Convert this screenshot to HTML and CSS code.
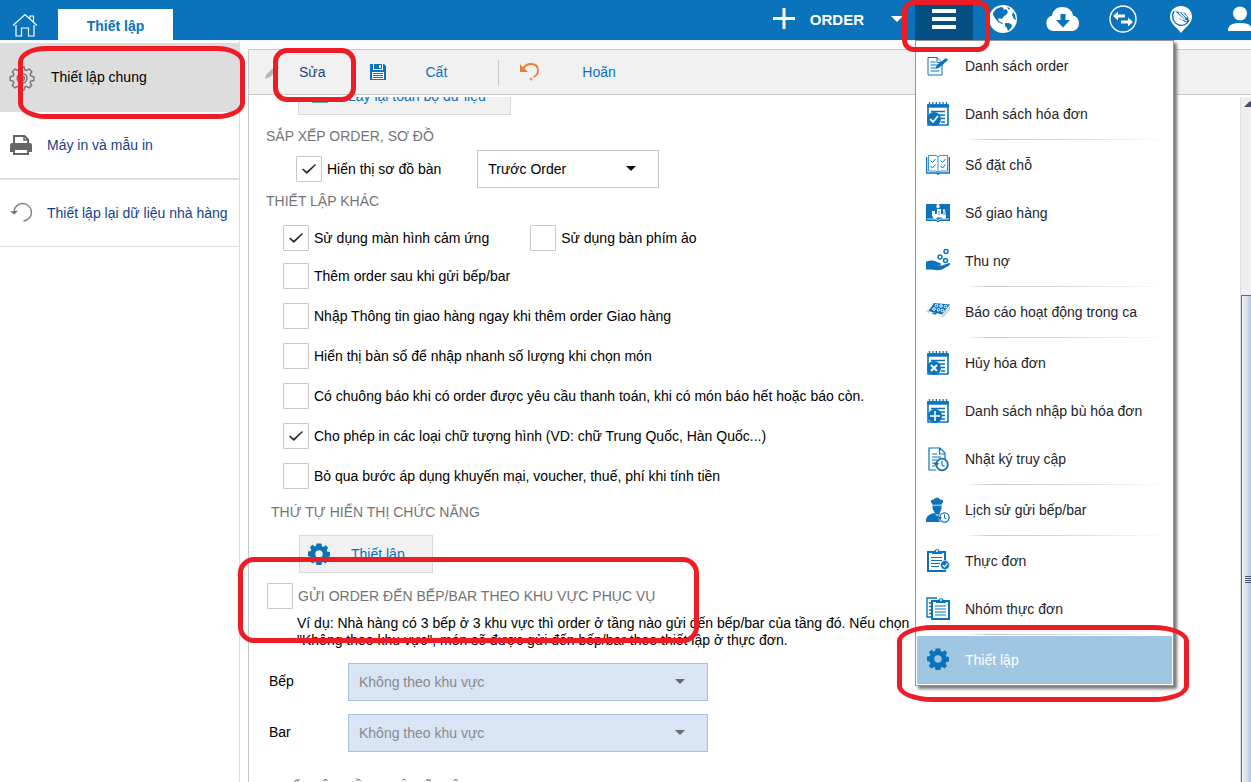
FILE: index.html
```html
<!DOCTYPE html>
<html lang="vi">
<head>
<meta charset="utf-8">
<title>Thiết lập</title>
<meta name="viewport" content="width=device-width, initial-scale=1">
<link rel="stylesheet" href="styles.css">
</head>
<body>
<svg class="defs" aria-hidden="true">
  <defs>
    <symbol id="gear" viewBox="0 0 22 22">
      <path fill-rule="evenodd" d="M8.500.500h5l.4 2.800 1.300.6 2.500-1.600 2.400 2.500-1.400 2.400.5 1.300 2.800.5v4.500l-2.800.6-.6 1.400 1.400 2.400-2.500 2.500-2.300-1.500-1.300.6-.4 2.500h-5l-.5-2.500-1.300-.6-2.400 1.500-2.500-2.500 1.500-2.400-.6-1.400L0 13V8.500L2.800 8l.5-1.300L1.900 4.300l2.400-2.500 2.500 1.600 1.300-.6zM11 7.300a3.700 3.700 0 1 0 0 7.400 3.700 3.700 0 0 0 0-7.400z"/>
    </symbol>
    <symbol id="notepad" viewBox="0 0 24 26">
      <path d="M2 4h20v20H2z" fill="#fff" stroke="currentColor" stroke-width="1.600"/>
      <path d="M1.200 3.500h21.600v3.200H1.200z" fill="currentColor"/>
      <path d="M3.500 1v4M6.900 1v4M10.300 1v4M13.700 1v4M17.100 1v4M20.500 1v4" stroke="currentColor" stroke-width="1.300"/>
      <path d="M5 10.500h14M12 14h7M15 17.500h4M15 21h4" stroke="currentColor" stroke-width="1.400"/>
    </symbol>
  </defs>
</svg>

<header class="topbar">
  <a class="home" href="#" aria-label="Trang chủ">
    <svg width="26" height="24" viewBox="0 0 26 24" fill="none" stroke="#fff" stroke-width="1.200"><path d="M1 12.500 13 1.500l12 11M4 12v11h5.500v-8h7v8H22V12M18 5.500V3h3.500v6"/></svg>
  </a>
  <a class="tab" href="#">Thiết lập</a>
  <nav class="actions">
    <button class="add-order" type="button">
      <svg width="22" height="22" viewBox="0 0 22 22"><path d="M11 0v21M0 10.500h22" stroke="#fff" stroke-width="3"/></svg>
      ORDER
    </button>
    <button class="more" type="button" aria-label="Thêm"><span class="tri"></span></button>
    <div class="menu-wrap">
      <button class="burger" type="button" aria-label="Menu"><span></span><span></span><span></span></button>
      <div class="menu">
        <a href="#"><svg width="24" height="26" viewBox="0 0 24 26" fill="none" stroke="currentColor"><path d="M2 4.500h9l5 5V22H2zM11 4.500v5h5M4.500 9h5M4.500 12h8M4.500 15h7M4.500 18h9" stroke-width="1"/><path d="m10 15 1.500-3L20 5.500l1.500 1.500-8 7z" fill="currentColor" stroke-width="1"/></svg>Danh sách order</a>
        <a href="#"><svg width="24" height="26" viewBox="0 0 24 26"><use href="#notepad"/><circle cx="8" cy="18" r="7" fill="currentColor"/><path d="m4 18 3 3 5-6" fill="none" stroke="#fff" stroke-width="1.800"/></svg>Danh sách hóa đơn</a>
        <hr>
        <a href="#"><svg width="24" height="26" viewBox="0 0 24 26" fill="none" stroke="currentColor"><path d="M.500 5v16h10l1.500 1 1.500-1h10V5" stroke-width="1.600"/><path d="M2.500 3.500H10l2 1.500 2-1.500h7.500V19H14l-2 1.500-2-1.500H2.500zM12 5v15" stroke-width=".800"/><path d="m4.500 8.500 2 2 3-3.500M4.500 14l2 2 3-3.500M14.500 8.500l2 2 3-3.500M14.500 14l2 2 3-3.500" stroke-width="1"/></svg>Sổ đặt chỗ</a>
        <a href="#"><svg width="24" height="26" viewBox="0 0 24 26"><path d="M0 4h10l2 1 2-1h10v17H14l-2 1.500L10 21H0z" fill="currentColor"/><path d="M1 19h9l2 1.500 2-1.500h9" fill="none" stroke="#fff" stroke-width=".800"/><circle cx="12" cy="6.500" r="1.700" fill="#fff"/><path d="M6 11h3v3h2V9h4v5h2V9.500h2l1 8H7l-1-2z" fill="#fff"/><circle cx="9" cy="17" r="2" fill="#fff"/><circle cx="18" cy="17" r="2" fill="#fff"/><path d="M13 11v4M18 11v4" stroke="currentColor" stroke-width=".800"/></svg>Sổ giao hàng</a>
        <a href="#"><svg width="24" height="26" viewBox="0 0 24 26"><path d="M0 14c3-2 8-2 11 0l4 1.500-.5 1.500H10l6 .5 7-2.500c1.500 0 1.500 1.500 0 2.500L17 21c-5 2.500-9 0-17 .5z" fill="currentColor"/><g fill="none" stroke="currentColor" stroke-width="1.500"><circle cx="14" cy="9" r="2"/><circle cx="20" cy="3.500" r="2"/><circle cx="19.500" cy="12.500" r="2"/></g></svg>Thu nợ</a>
        <hr>
        <a href="#"><svg width="24" height="26" viewBox="0 0 24 26"><path d="m0 12 4-2-1 4 12 3.500L24 7v4l-7 7.500L2 14z" fill="#cfd2d6"/><path d="m8 4 16 1.500-8 10L2.500 12z" fill="currentColor"/><g fill="none" stroke="#fff"><circle cx="10.500" cy="6.500" r="1.300"/><circle cx="15" cy="7" r="1.300"/><circle cx="19.500" cy="7.500" r="1.300"/><circle cx="8" cy="10" r="1.300"/><circle cx="12.500" cy="10.800" r="1.300"/><circle cx="16.500" cy="11.500" r="1.300"/></g><path d="m6.500 14 4 1" stroke="currentColor" stroke-width="1.600"/></svg>Báo cáo hoạt động trong ca</a>
        <hr>
        <a href="#"><svg width="24" height="26" viewBox="0 0 24 26"><use href="#notepad"/><circle cx="8" cy="18" r="7" fill="currentColor"/><path d="m5 15 6 6M11 15l-6 6" stroke="#fff" stroke-width="2"/></svg>Hủy hóa đơn</a>
        <a href="#"><svg width="24" height="26" viewBox="0 0 24 26"><use href="#notepad"/><circle cx="9" cy="18" r="7" fill="currentColor"/><path d="M9 13v10M4 18h10" stroke="#fff" stroke-width="1.600"/></svg>Danh sách nhập bù hóa đơn</a>
        <a href="#"><svg width="24" height="26" viewBox="0 0 24 26" fill="none" stroke="currentColor" stroke-width="1.200"><path d="M10 24H3V2h11l5 5v6M13.500 2v6H19M6 8h5M6 11h9M6 14h5M6 17h4M6 20h3"/><circle cx="16" cy="18.500" r="5.800" stroke-width="1.800" fill="#fff"/><path d="M16 15v4l2.500 1.500"/><path d="m7 17 3.500 3.500L13 17z" fill="currentColor" stroke="none"/></svg>Nhật ký truy cập</a>
        <hr>
        <a href="#"><svg width="24" height="26" viewBox="0 0 24 26"><path d="M6.500 7C3.500 5 5 2 8 2.500 9 0 13 0 14 2.500c3-.5 4.500 2.500 1.500 4.500v3c0 4-2 5.500-2 7l-1.500.5-3 0L8.500 15c-1.500-1.500-2-3-2-5z" fill="currentColor"/><path d="M6.500 8.200h9" stroke="#fff" stroke-width=".800"/><path d="M0 25c0-5 1-7 8-9l3 3 3-3 3 1v8z" fill="currentColor"/><circle cx="18.500" cy="20.500" r="6" fill="#fff"/><circle cx="18.500" cy="20.500" r="4.600" fill="none" stroke="currentColor" stroke-width="1.300"/><path d="M18.500 17.500V21l2 1" fill="none" stroke="currentColor"/><path d="m11.500 20 2.500 2.500 2-2.500z" fill="currentColor"/></svg>Lịch sử gửi bếp/bar</a>
        <hr>
        <a href="#"><svg width="24" height="26" viewBox="0 0 24 26" fill="none" stroke="currentColor"><path d="M6 4H2v19h17v-3M15 4h4v9" stroke-width="2"/><path d="M6 6V3h2.500C9 .500 13 .500 13.500 3H16v3z" fill="currentColor" stroke="none"/><circle cx="11" cy="3" r="1" fill="#fff" stroke="none"/><path d="M5 9.500h11M5 12.500h11M5 15.500h9M5 18.500h8" stroke-width="1.200"/><circle cx="19" cy="17" r="4.500" fill="currentColor" stroke="#fff" stroke-width=".600"/><path d="m16.800 17 1.700 1.800 3-3.500" stroke="#fff" stroke-width="1.200"/></svg>Thực đơn</a>
        <a href="#"><svg width="24" height="26" viewBox="0 0 24 26" fill="none" stroke="currentColor"><path d="M11 2H1v19h4M3 7h2M3 10.500h2M3 14h2M3 17.500h2" stroke-width="1.400"/><path d="M10 5H6v18h17V5h-4" stroke-width="2"/><path d="M10 7V4h2.500c.5-2.500 4.500-2.500 5 0H20v3z" fill="currentColor" stroke="none"/><circle cx="15" cy="4" r="1" fill="#fff" stroke="none"/><path d="M9 10h11M9 13h11M9 16h11M9 19h11" stroke-width="1.200"/></svg>Nhóm thực đơn</a>
        <hr>
        <a class="selected" href="#"><svg width="24" height="26" viewBox="0 0 24 26" fill="currentColor"><use href="#gear" x="1" y="1" width="22" height="22"/></svg>Thiết lập</a>
      </div>
      <span class="mark mark-burger"></span>
      <span class="mark mark-selected"></span>
    </div>
    <button class="ico" type="button" aria-label="Ngôn ngữ"><svg width="28" height="30" viewBox="0 0 28 30"><circle cx="14" cy="15" r="14" fill="#fff"/><path d="M4 9 7 5l5-2 3 1-1 2 3-1 2 3-2 3-2 1-2 3-3-1-1 2 2 2 3 1-1 1-4-2-3-4-2-3zM16 19l4 0 3 2-1 3-3 3-1-3-2-2zM18 3l3 1-1 2zM24 8l2 3 1 5-2-1-2-4z" fill="#0a73bb"/></svg></button>
    <button class="ico" type="button" aria-label="Tải xuống"><svg width="36" height="24" viewBox="0 0 36 24"><path d="M8 24a8 8 0 0 1-1-15.500C8 3 12 0 17 0c6 0 10 3 11 8.500A8 8 0 0 1 28 24z" fill="#fff"/><path d="M15.500 7h5v6H25l-7 7.500-7-7.500h4.500z" fill="#0a73bb"/></svg></button>
    <button class="ico swap" type="button" aria-label="Đồng bộ"><svg width="28" height="28" viewBox="0 0 28 28"><circle cx="14" cy="14" r="13" fill="none" stroke="#fff" stroke-width="1.400"/><path d="m4 11 5-4.500v3h7v3H9v3zM24 17l-5-4.500v3h-7v3h7v3z" fill="#fff"/></svg></button>
    <button class="ico pin" type="button" aria-label="Nhà hàng"><svg width="24" height="27" viewBox="0 0 24 27"><path d="M12 0c7 0 11 5 11 11 0 7-7 10-11 16C8 21 1 18 1 11 1 5 5 0 12 0z" fill="#fff"/><path d="M5 5c-3 5-1 12 5 14 4 1 8-1 10-5" fill="none" stroke="#0a73bb" stroke-width="1.400"/><path d="M6 5l4 1 6 1 3 4 1 5-4 0-5-3z" fill="#0a73bb"/><path d="m6 6 8 7 4 2M10 6.500l6 6M13 6.500l5 5M8 9l6 5" fill="none" stroke="#fff" stroke-width="1.100"/></svg></button>
    <button class="ico user" type="button" aria-label="Tài khoản"><svg width="26" height="26" viewBox="0 0 26 26"><circle cx="13" cy="7.500" r="7" fill="#fff"/><path d="M1 25c0-6 4-8 12-8s12 2 12 8z" fill="#fff"/></svg></button>
  </nav>
</header>

<div class="page">
  <aside class="side">
    <a class="active" href="#">
      <svg width="26" height="26" viewBox="0 0 22 22" fill="none" stroke="#757575" stroke-width="1.200"><path d="M9.300 1.500h3.400l.7 2.600 1.300.5L17.100 3.400l2.200 2.300-1.400 2.200.6 1.400 2.500.7v3l-2.500.6-.6 1.400 1.300 2.200-2.200 2.200-2.200-1.300-1.400.6-.7 2.500H9.300l-.6-2.500-1.400-.6L5 19.400l-2.200-2.200L4.100 15l-.6-1.400L1 13v-3l2.500-.7.6-1.400-1.300-2.200L5 3.400l2.300 1.200 1.400-.5z"/><circle cx="11" cy="11.300" r="4.200"/><circle cx="11" cy="11.300" r="2"/></svg>
      Thiết lập chung</a>
    <a class="printer" href="#">
      <svg width="22" height="20" viewBox="0 0 22 20"><path d="M4 8V1h10.500L18 4.500V8" fill="none" stroke="#666" stroke-width="2"/><path d="M14 0v5h4" fill="none" stroke="#666" stroke-width="1.500"/><path d="M2 8h18a2 2 0 0 1 2 2v7H0v-7a2 2 0 0 1 2-2z" fill="#666"/><path d="M4 14h14v5H4z" fill="#fff" stroke="#666" stroke-width="2"/></svg>
      Máy in và mẫu in</a>
    <a class="reset" href="#">
      <svg width="24" height="22" viewBox="0 0 24 22"><path d="M4 10C4 5 8 1.500 12.500 1.500c5 0 9 4 9 9 0 4-3 8-8 8.500" fill="none" stroke="#808080" stroke-width="1.400"/><path d="M0 9.500 8 8.500 4.500 12.500z" fill="#707070"/></svg>
      Thiết lập lại dữ liệu nhà hàng</a>
  </aside>

  <main class="panel">
    <div class="toolbar">
      <button class="edit" type="button"><svg width="16" height="16" viewBox="0 0 16 16"><path d="M1 15 2 11 11 2l3-1 1 3-9 9z" fill="#b8b8b8"/></svg>Sửa</button>
      <button class="save" type="button"><svg width="16" height="16" viewBox="0 0 16 16"><path d="M0 0h14l2 2v14H0z" fill="#0a73bb"/><path d="M3.500 0v5M12.500 0v5M3 5.500h10" stroke="#fff"/><path d="M9 1h2v3H9z" fill="#fff"/><path d="M2 8h12v7H2z" fill="#fff"/><path d="M3 9.500h10M3 11.500h10M3 13.500h10" stroke="#0a73bb"/></svg>Cất</button>
      <span class="divider"></span>
      <button class="undo" type="button"><svg width="20" height="20" viewBox="0 0 20 20"><path d="M3 7C5 3 8 2 11 2c5 0 7 3 7 6.500S16 14 13.500 15" fill="none" stroke="#ed7d31" stroke-width="1.800"/><path d="M0 2v8h8L5.500 7.500 3 5.500z" fill="#ed7d31"/><path d="M11 15.500v3M9.500 17h3" stroke="#ed7d31"/></svg>Hoãn</button>
    </div>
    <div class="body">
      <form class="content">
        <button class="reload" type="button"><svg width="18" height="22" viewBox="0 0 18 22"><path d="M1 18c0-4 3-6 8-6s8 2 8 6z" fill="#4fae84"/></svg>Lấy lại toàn bộ dữ liệu</button>
        <h2>SẮP XẾP ORDER, SƠ ĐỒ</h2>
        <div class="row-order">
          <label class="check"><input type="checkbox" checked>Hiển thị sơ đồ bàn</label>
          <span class="select"><select aria-label="Vị trí sơ đồ bàn"><option>Trước Order</option></select></span>
        </div>
        <h2 class="other-title">THIẾT LẬP KHÁC</h2>
        <div class="checks">
          <div class="pair">
            <label class="check"><input type="checkbox" checked>Sử dụng màn hình cảm ứng</label>
            <label class="check"><input type="checkbox">Sử dụng bàn phím ảo</label>
          </div>
          <label class="check"><input type="checkbox">Thêm order sau khi gửi bếp/bar</label>
          <label class="check"><input type="checkbox">Nhập Thông tin giao hàng ngay khi thêm order Giao hàng</label>
          <label class="check"><input type="checkbox">Hiển thị bàn số để nhập nhanh số lượng khi chọn món</label>
          <label class="check"><input type="checkbox">Có chuông báo khi có order được yêu cầu thanh toán, khi có món báo hết hoặc báo còn.</label>
          <label class="check"><input type="checkbox" checked>Cho phép in các loại chữ tượng hình (VD: chữ Trung Quốc, Hàn Quốc...)</label>
          <label class="check"><input type="checkbox">Bỏ qua bước áp dụng khuyến mại, voucher, thuế, phí khi tính tiền</label>
        </div>
        <h2 class="display-title">THỨ TỰ HIỂN THỊ CHỨC NĂNG</h2>
        <button class="config" type="button"><svg width="22" height="22" viewBox="0 0 22 22" fill="currentColor"><use href="#gear"/></svg>Thiết lập</button>
        <label class="check area"><input type="checkbox">GỬI ORDER ĐẾN BẾP/BAR THEO KHU VỰC PHỤC VỤ</label>
        <p class="hint">Ví dụ: Nhà hàng có 3 bếp ở 3 khu vực thì order ở tầng nào gửi đến bếp/bar của tầng đó. Nếu chọn<br>"Không theo khu vực", món sẽ được gửi đến bếp/bar theo thiết lập ở thực đơn.</p>
        <div class="field"><label for="kitchen">Bếp</label><span class="select"><select id="kitchen" disabled><option>Không theo khu vực</option></select></span></div>
        <div class="field"><label for="bar">Bar</label><span class="select"><select id="bar" disabled><option>Không theo khu vực</option></select></span></div>
        <h2 class="next-title">THIẾT LẬP ĐỒNG BỘ DỮ LIỆU</h2>
      </form>
      <div class="scroll" aria-hidden="true"><span class="up"></span><span class="thumb"><i></i><i></i><i></i><i></i></span></div>
    </div>
  </main>
</div>
<span class="mark mark-side"></span>
<span class="mark mark-edit"></span>
<span class="mark mark-area"></span>
</body>
</html>
```

FILE: styles.css
```css
* { box-sizing: border-box; }

body {
  margin: 0;
  height: 100vh;
  position: relative;
  display: flex;
  flex-direction: column;
  overflow: hidden;
  background: #fff;
  color: #000;
  font: 14px/17px "Liberation Sans", Arial, sans-serif;
}

button, select, input { font: inherit; margin: 0; }
button { border: 0; padding: 0; background: none; color: inherit; }
a { color: inherit; text-decoration: none; }
svg { flex: none; display: block; }
.defs { position: absolute; width: 0; height: 0; }

/* Top bar */
.topbar {
  flex: none;
  display: flex;
  align-items: flex-start;
  height: 40px;
  background: #0a73bb;
  color: #fff;
}
.home { padding: 13px 20px 0 12px; }
.tab {
  width: 115px;
  height: 31px;
  margin-top: 9px;
  line-height: 35px;
  text-align: center;
  background: #fff;
  color: #0a73bb;
  font-weight: bold;
}
.actions {
  display: flex;
  align-items: center;
  height: 38px;
  margin-left: auto;
}
.add-order {
  display: flex;
  align-items: center;
  gap: 15px;
  margin-right: 27px;
  font-size: 15px;
  font-weight: bold;
}
.more { margin-right: 12px; }
.tri {
  display: block;
  border: 6px solid transparent;
  border-top-color: #fff;
  border-bottom: 0;
}
.menu-wrap {
  position: relative;
  z-index: 2;
  align-self: flex-start;
  height: 40px;
  padding-top: 3px;
  margin-right: 16px;
}
.burger {
  display: flex;
  flex-direction: column;
  align-items: center;
  gap: 4px;
  width: 58px;
  height: 37px;
  padding-top: 6px;
  background: #044f82;
}
.burger span { width: 24px; height: 4px; background: #fff; }
.ico { margin-right: 28px; }
.ico.swap { margin-right: 32px; }
.ico.pin { margin-right: 34px; }
.ico.user { margin-right: -2px; }

/* Drop-down menu */
.menu {
  position: absolute;
  top: 40px;
  left: 0;
  width: 259px;
  padding: 1px;
  background: #fff;
  border: 1px solid #9395a0;
  box-shadow: 3px 3px 3px #777;
  color: #1e1e2e;
}
.menu a {
  display: flex;
  align-items: center;
  gap: 15px;
  height: 48px;
  padding-left: 9px;
  white-space: nowrap;
}
.menu svg { width: 24px; color: #0a73bb; }
.menu hr {
  height: 1px;
  margin: 1px 4px 1px 48px;
  border: 0;
  background: linear-gradient(90deg, transparent, #c8c8d0 12%, #d8d8dc 50%, transparent);
}
.menu .selected { background: #9fc6e3; color: #fff; }

/* Sidebar */
.page { flex: 1; min-height: 0; display: flex; border-top: 1px solid #f0f6ff; }
.side {
  flex: none;
  width: 240px;
  margin-right: 8px;
  padding-top: 2px;
  border-right: 1px solid #ddd;
  color: #143f8c;
}
.side a {
  display: flex;
  align-items: center;
  height: 67px;
  border-bottom: 1px solid #ddd;
  white-space: nowrap;
}
.side .active {
  gap: 16px;
  height: 69px;
  padding-left: 9px;
  border: 0;
  background: #ddd;
  color: #000;
}
.side .printer { gap: 15px; height: 68px; padding-left: 10px; border-bottom-width: 2px; }
.side .reset { gap: 13px; padding-left: 10px; }

/* Settings panel */
.panel {
  flex: 1;
  min-width: 0;
  display: flex;
  flex-direction: column;
  margin-top: 8px;
  border: solid #c8c8c8;
  border-width: 1px 0 0 1px;
}
.toolbar {
  flex: none;
  display: flex;
  align-items: center;
  height: 45px;
  padding-left: 15px;
  background: #f1f1f1;
  border-bottom: 1px solid #c8c8c8;
  color: #0a73bb;
}
.toolbar button { display: flex; align-items: center; }
.edit { gap: 19px; color: #17497f; }
.save { gap: 40px; margin-left: 44px; }
.divider { width: 1px; height: 25px; margin: 0 21px 0 51px; background: #c8c8c8; }
.undo { gap: 42px; }
.body { flex: 1; min-height: 0; display: flex; margin-top: 2px; }
.content { flex: 1; min-width: 0; overflow: hidden; padding-left: 17px; }

h2 { margin: 0; font-size: 14px; font-weight: normal; color: #747474; }

.reload, .config {
  display: flex;
  align-items: center;
  height: 38px;
  background: #f1f1f1;
  border: 1px solid #d8d8d8;
  color: #0a73bb;
}
.reload { gap: 19px; width: 213px; margin: -20px 0 13px 32px; padding-left: 12px; }
.config { gap: 21px; width: 134px; margin-left: 33px; padding-left: 8px; }

.check { display: flex; align-items: center; gap: 5px; width: max-content; }
.check input {
  appearance: none;
  display: grid;
  place-items: center;
  width: 26px;
  height: 26px;
  border: 1px solid #c8c8c8;
  border-radius: 1px;
  background: #fff;
}
.check input:checked::before {
  content: "";
  width: 14px;
  height: 10px;
  background: #2a2a2a;
  clip-path: polygon(0 54%, 8% 45%, 34% 75%, 93% 0, 100% 9%, 35% 100%);
}

.select { position: relative; display: block; width: 182px; }
.select::after {
  content: "";
  position: absolute;
  top: 16px;
  right: 23px;
  border: 5px solid transparent;
  border-top-color: #111;
  border-bottom: 0;
  pointer-events: none;
}
select {
  appearance: none;
  display: block;
  width: 100%;
  height: 38px;
  padding: 0 10px;
  border: 1px solid #c8c8c8;
  border-radius: 0;
  background: #fff;
  color: #000;
}
select:disabled { background: #d9e4f5; border-color: #a8bfdf; color: #8a8a8a; opacity: 1; }

.row-order { display: flex; align-items: center; gap: 36px; margin: 5px 0 5px 30px; }
.other-title { margin-bottom: 15px; }
.checks { display: grid; gap: 14px; margin-left: 17px; }
.pair { display: flex; gap: 41px; margin-bottom: -2px; }
.display-title { margin: 15px 0 14px 5px; }
.area { margin: 10px 0 6px 1px; color: #747474; }
.hint { margin: 0 0 14px 31px; white-space: nowrap; }
.field { display: flex; margin: 0 0 13px 3px; }
.field label { width: 79px; padding-top: 10px; }
.field .select { width: 360px; }
.field .select::after { border-top-color: #6a6a6a; }
.next-title { margin: 27px 0 0 3px; }

/* Scroll bar */
.scroll {
  flex: none;
  display: flex;
  flex-direction: column;
  width: 11px;
  overflow: hidden;
  background: #efefef;
  border-left: 1px solid #e0e0e0;
}
.up {
  flex: none;
  width: 0;
  margin: 4px 0 188px 3px;
  border: 6px solid transparent;
  border-bottom-color: #46506e;
  border-top: 0;
}
.thumb {
  flex: 1;
  display: flex;
  flex-direction: column;
  align-items: flex-end;
  justify-content: center;
  gap: 1px;
  padding-top: 80px;
  border: solid #5a6a92;
  border-width: 1px 0 0 1px;
  background: linear-gradient(90deg, #eef1f6, #d5dce8 60%, #b4c3da);
}
.thumb i { width: 6px; height: 1px; background: #4a5678; }

/* Red highlights */
.mark {
  position: absolute;
  z-index: 3;
  border: 5px solid #ee1c24;
  border-radius: 14px;
  pointer-events: none;
}
.mark-side { left: 18px; top: 46px; width: 227px; height: 73px; border-radius: 28px / 16px; }
.mark-edit { left: 273px; top: 48px; width: 83px; height: 54px; }
.mark-area { left: 238px; top: 557px; width: 461px; height: 86px; border-radius: 16px; }
.mark-burger { left: -13px; top: 0; width: 88px; height: 52px; border-radius: 12px; }
.mark-selected { left: -18px; top: 625px; width: 292px; height: 77px; border-radius: 36px / 16px; }
```
